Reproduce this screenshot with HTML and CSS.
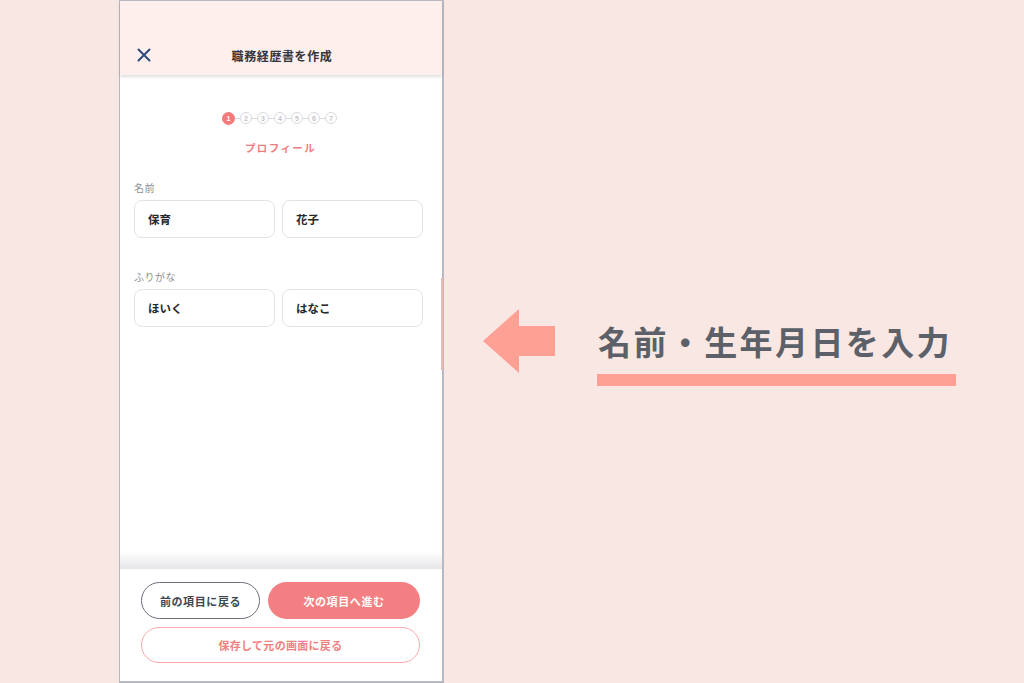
FILE: index.html
```html
<!DOCTYPE html>
<html lang="ja">
<head>
<meta charset="utf-8">
<link rel="stylesheet" href="styles.css">
</head>
<body>
<div class="stage">
  <div class="phone">
    <header class="top">
      <div class="top-row">
        <svg class="close" width="14" height="14" viewBox="0 0 14 14"><path d="M1.5 1.5 L12.5 12.5 M12.5 1.5 L1.5 12.5" stroke="#2c4a7c" stroke-width="2" stroke-linecap="round" fill="none"/></svg>
        <div class="title">職務経歴書を作成</div>
      </div>
    </header>
    <main class="content">
      <div class="stepper">
        <span class="dot active">1</span><span class="line"></span>
        <span class="dot">2</span><span class="line"></span>
        <span class="dot">3</span><span class="line"></span>
        <span class="dot">4</span><span class="line"></span>
        <span class="dot">5</span><span class="line"></span>
        <span class="dot">6</span><span class="line"></span>
        <span class="dot">7</span>
      </div>
      <div class="step-name">プロフィール</div>
      <div class="field">
        <div class="label">名前</div>
        <div class="pair">
          <div class="input">保育</div>
          <div class="input">花子</div>
        </div>
      </div>
      <div class="field second">
        <div class="label">ふりがな</div>
        <div class="pair">
          <div class="input">ほいく</div>
          <div class="input">はなこ</div>
        </div>
      </div>
      <div class="scrollbar"></div>
    </main>
    <footer class="bottom">
      <div class="btn-row">
        <div class="btn outline">前の項目に戻る</div>
        <div class="btn primary">次の項目へ進む</div>
      </div>
      <div class="btn save">保存して元の画面に戻る</div>
    </footer>
  </div>
  <div class="aside">
    <svg class="arrow" width="72" height="64" viewBox="0 0 72 64"><polygon points="0,32 36,0 36,17 72,17 72,47 36,47 36,64" fill="#ffa094"/></svg>
    <div class="caption">
      <div class="caption-text">名前・生年月日を入力</div>
      <div class="caption-bar"></div>
    </div>
  </div>
</div>
</body>
</html>
```
FILE: styles.css
```css
* { box-sizing: border-box; }
html, body { margin: 0; padding: 0; }
body {
  background: #f9e7e4;
  font-family: "Noto Sans CJK JP", "Noto Sans", sans-serif;
  width: 1024px;
  height: 683px;
  overflow: hidden;
}
.stage {
  display: flex;
  height: 683px;
}
.phone {
  margin-left: 119px;
  width: 325px;
  height: 683px;
  border: 1px solid #b8b9c2;
  border-right-width: 2px;
  border-bottom-width: 2px;
  background: #fff;
  display: flex;
  flex-direction: column;
  position: relative;
}
.top {
  height: 74px;
  background: #fcefec;
  padding-top: 36px;
  box-shadow: 0 2px 3px rgba(0,0,0,0.13);
  position: relative;
  z-index: 2;
}
.top-row {
  height: 36px;
  display: flex;
  align-items: center;
  position: relative;
}
.close {
  position: absolute;
  left: 17px;
  top: 11px;
}
.title {
  flex: 1;
  text-align: center;
  font-size: 12px;
  font-weight: 700;
  letter-spacing: 0.6px;
  color: #33363c;
  padding-left: 2px;
}
.content {
  flex: 1;
  padding: 37px 19px 0 14px;
  position: relative;
}
.stepper {
  display: flex;
  align-items: center;
  justify-content: center;
  height: 12px;
  padding-left: 2px;
}
.dot {
  width: 12px;
  height: 12px;
  border-radius: 50%;
  border: 1px solid #d9d9de;
  color: #c4c4ca;
  font-size: 7px;
  font-weight: 700;
  display: flex;
  align-items: center;
  justify-content: center;
  line-height: 1;
  font-family: "Liberation Sans", sans-serif;
}
.dot.active {
  background: #f47a7c;
  border-color: #f47a7c;
  color: #fff;
  width: 13px;
  height: 13px;
}
.line {
  width: 5px;
  height: 1px;
  background: #d9d9de;
}
.step-name {
  margin-top: 16px;
  text-align: center;
  font-size: 10.5px;
  line-height: 16px;
  font-weight: 700;
  letter-spacing: 1.4px;
  color: #f07b7f;
  padding-left: 4px;
}
.field { margin-top: 24px; }
.field.second { margin-top: 31px; }
.label {
  font-size: 10px;
  line-height: 16px;
  color: #8c9098;
  letter-spacing: 0.5px;
}
.pair {
  margin-top: 4px;
  display: flex;
  gap: 7px;
}
.input {
  flex: 1;
  height: 38px;
  border: 1px solid #e3e3e7;
  border-radius: 8px;
  padding-left: 13px;
  display: flex;
  align-items: center;
  font-size: 11.5px;
  font-weight: 700;
  color: #26282c;
}
.scrollbar {
  position: absolute;
  right: -1px;
  top: 203px;
  width: 2px;
  height: 92px;
  background: #f3b7af;
}
.bottom {
  position: relative;
  padding: 13px 22px 18px 21px;
  background: #fff;
}
.bottom::before {
  content: "";
  position: absolute;
  left: 0;
  right: 0;
  top: -18px;
  height: 18px;
  background: linear-gradient(to bottom, rgba(232,232,236,0), #e6e6ea);
}
.btn-row {
  display: flex;
  gap: 8px;
}
.btn {
  height: 37px;
  border-radius: 19px;
  display: flex;
  align-items: center;
  justify-content: center;
  font-size: 11px;
  font-weight: 700;
  letter-spacing: 0.6px;
}
.btn.outline {
  width: 119px;
  border: 1.5px solid #6b707a;
  color: #41454e;
}
.btn.primary {
  flex: 1;
  background: #f47f82;
  color: #fff;
}
.btn.save {
  margin-top: 8px;
  height: 36px;
  border: 1.5px solid #f9aaaa;
  color: #f07f82;
  letter-spacing: 0.3px;
}
.aside {
  display: flex;
  align-items: flex-start;
  padding-top: 309px;
  padding-left: 39px;
}
.arrow { display: block; flex: none; }
.caption {
  margin-left: 42px;
  margin-top: 12px;
}
.caption-text {
  font-size: 33px;
  line-height: 40px;
  font-weight: 700;
  color: #5c6068;
  letter-spacing: 2.4px;
  white-space: nowrap;
  padding-left: 1px;
}
.caption-bar {
  margin-top: 13px;
  width: 359px;
  height: 12px;
  background: #ffa094;
}
```
